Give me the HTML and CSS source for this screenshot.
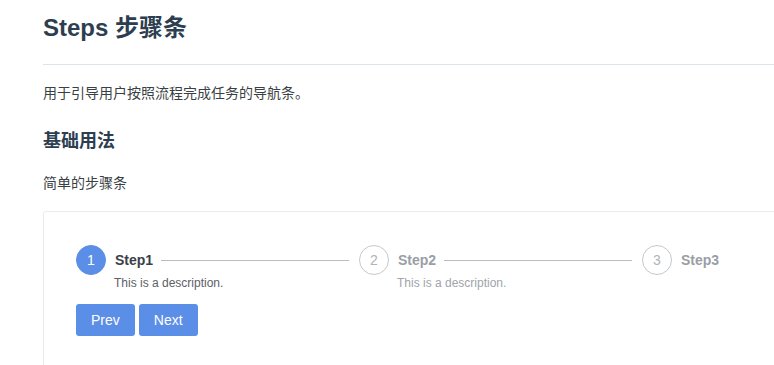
FILE: index.html
```html
<!DOCTYPE html>
<html lang="en">
<head>
    <meta charset="UTF-8">
    <meta name="viewport" content="width=device-width, initial-scale=1.0">
    <title>Steps 步骤条</title>
    <link rel="stylesheet" href="styles.css">
</head>
<body>

    <div class="content">
        <h1 class="page-title">Steps 步骤条</h1>
        <p class="text intro">用于引导用户按照流程完成任务的导航条。</p>

        <h3 class="section-title">基础用法</h3>
        <p class="text hint">简单的步骤条</p>

        <div class="demo">
            <div class="steps">
                <div class="step active">
                    <div class="step-icon">1</div>
                    <div class="step-body">
                        <div class="step-head">
                            <span class="step-title">Step1</span>
                            <span class="step-line"></span>
                        </div>
                        <div class="step-desc">This is a description.</div>
                    </div>
                </div>
                <div class="step">
                    <div class="step-icon">2</div>
                    <div class="step-body">
                        <div class="step-head">
                            <span class="step-title">Step2</span>
                            <span class="step-line"></span>
                        </div>
                        <div class="step-desc">This is a description.</div>
                    </div>
                </div>
                <div class="step">
                    <div class="step-icon">3</div>
                    <div class="step-body">
                        <div class="step-head">
                            <span class="step-title">Step3</span>
                        </div>
                    </div>
                </div>
            </div>

            <div class="buttons">
                <button class="btn">Prev</button>
                <button class="btn">Next</button>
            </div>
        </div>
    </div>

</body>
</html>
```

FILE: styles.css
```css
body {
    margin: 0;
    overflow-x: hidden;
    font-family: "Liberation Sans", Arial, "Noto Sans CJK SC", sans-serif;
    color: #2c3e50;
}
.content {
    width: 920px;
    padding-left: 43px;
}
.page-title {
    margin: 13px 0 0;
    padding-bottom: 21px;
    font-size: 24px;
    line-height: 30px;
    border-bottom: 1px solid #dde4ea;
}
.text {
    margin: 0;
    font-size: 14px;
    line-height: 22px;
    color: #3a3f45;
}
.intro {
    margin-top: 17px;
}
.section-title {
    margin: 24px 0 0;
    font-size: 18px;
    line-height: 26px;
}
.hint {
    margin-top: 18px;
}
.demo {
    margin-top: 17px;
    border: 1px solid #ebebeb;
    border-radius: 3px;
    padding: 33px 32px 40px;
    height: 200px;
}
.steps {
    display: flex;
}
.step {
    display: flex;
    width: 283px;
}
.step-icon {
    flex: none;
    width: 28px;
    height: 28px;
    border: 1px solid #c4c7cc;
    border-radius: 50%;
    color: #b0b3b8;
    font-size: 14px;
    line-height: 28px;
    text-align: center;
}
.step.active .step-icon {
    border-color: #5b8ee6;
    background-color: #5b8ee6;
    color: white;
}
.step-body {
    flex: 1;
    margin-left: 9px;
}
.step-head {
    display: flex;
    align-items: center;
    height: 30px;
}
.step-title {
    font-size: 14px;
    font-weight: bold;
    color: #9a9ea6;
}
.step.active .step-title {
    color: #3b4048;
}
.step-line {
    flex: 1;
    height: 1px;
    margin: 0 10px 0 8px;
    background-color: #b9bcc2;
}
.step-desc {
    margin-left: -1px;
    font-size: 12px;
    line-height: 16px;
    color: #a0a4ab;
}
.step.active .step-desc {
    color: #5c6066;
}
.buttons {
    display: flex;
    gap: 4px;
    margin-top: 13px;
}
.btn {
    height: 32px;
    padding: 0 15px;
    border: none;
    border-radius: 3px;
    background-color: #5b8ee6;
    color: white;
    font-family: inherit;
    font-size: 14px;
    cursor: pointer;
}
```
